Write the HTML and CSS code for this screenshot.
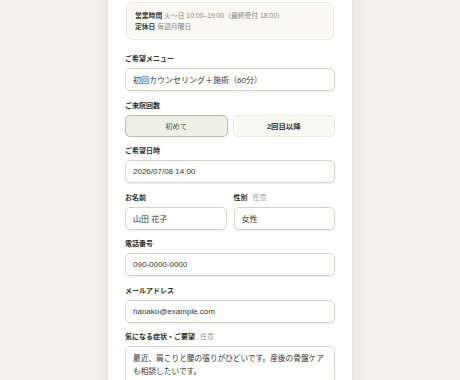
FILE: index.html
```html
<!DOCTYPE html>
<html lang="ja">
<head>
    <meta charset="UTF-8">
    <meta name="viewport" content="width=device-width, initial-scale=1.0">
    <title>ご予約フォーム</title>
    <link rel="stylesheet" href="styles.css">
</head>
<body>
    <div class="card">
        <!-- 営業案内 -->
        <div class="info">
            <p><strong>営業時間</strong> 火〜日 10:00–19:00（最終受付 18:00）</p>
            <p><strong>定休日</strong> 毎週月曜日</p>
        </div>

        <form class="form">
            <div class="field">
                <label for="menu">ご希望メニュー</label>
                <input type="text" id="menu" value="初回カウンセリング＋施術（60分）">
            </div>
            <div class="field">
                <label>ご来院回数</label>
                <div class="choice">
                    <button type="button" class="active">初めて</button>
                    <button type="button">2回目以降</button>
                </div>
            </div>
            <div class="field">
                <label for="date">ご希望日時</label>
                <input type="text" id="date" value="2026/07/08 14:00">
            </div>
            <div class="row">
                <div class="field">
                    <label for="name">お名前</label>
                    <input type="text" id="name" value="山田 花子">
                </div>
                <div class="field">
                    <label for="sex">性別<span class="optional">任意</span></label>
                    <input type="text" id="sex" value="女性">
                </div>
            </div>
            <div class="field">
                <label for="tel">電話番号</label>
                <input type="text" id="tel" value="090-0000-0000">
            </div>
            <div class="field">
                <label for="mail">メールアドレス</label>
                <input type="text" id="mail" value="hanako@example.com">
            </div>
            <div class="field">
                <label for="notes">気になる症状・ご要望<span class="optional">任意</span></label>
                <textarea id="notes" rows="3">最近、肩こりと腰の張りがひどいです。産後の骨盤ケアも相談したいです。</textarea>
            </div>
        </form>
    </div>
</body>
</html>
```

FILE: styles.css
```css
body {
    margin: 0;
    padding: 0;
    background-color: #f2f0ea;
    font-family: "Liberation Sans", "Noto Sans CJK JP", sans-serif;
    color: #33322e;
}
.card {
    width: 210px;
    margin: -16px auto 0;
    padding: 18px 17px 40px;
    background: #fff;
    box-shadow: 0 0 14px rgba(60, 55, 40, 0.10);
}
.info {
    margin: 0 1px;
    padding: 7px 8px;
    background: #faf9f5;
    border: 1px solid #ebe9e0;
    border-radius: 6px;
    font-size: 6.8px;
    color: #86847c;
}
.info p {
    margin: 0;
    line-height: 11px;
}
.info strong {
    color: #3a3935;
    font-weight: bold;
}
.form {
    margin-top: 14px;
}
.field {
    margin-bottom: 9.5px;
}
.field label {
    display: block;
    margin-bottom: 4px;
    font-size: 7px;
    line-height: 10px;
    font-weight: bold;
    color: #2f2e2a;
}
.optional {
    margin-left: 5px;
    font-weight: normal;
    color: #9a988f;
}
.field input, .field textarea {
    display: block;
    box-sizing: border-box;
    width: 100%;
    height: 23px;
    margin: 0;
    padding: 0 7px;
    font-family: "Liberation Sans", "Noto Sans CJK JP", sans-serif;
    font-size: 8px;
    color: #34332f;
    background: #fff;
    border: 1.5px solid #d6d3c5;
    border-radius: 5px;
    box-shadow: 0 1px 1px rgba(80, 75, 50, 0.08);
    outline: none;
}
.field textarea {
    height: 50px;
    padding: 5px 7px;
    font-size: 7.7px;
    line-height: 13px;
    resize: none;
}
.choice {
    display: grid;
    grid-template-columns: 1fr 1fr;
    gap: 5px;
}
.choice button {
    height: 22px;
    font-family: "Liberation Sans", "Noto Sans CJK JP", sans-serif;
    font-size: 7.4px;
    font-weight: bold;
    color: #3a3935;
    background: #f8f7f2;
    border: 1px solid #ebe9e0;
    border-radius: 5px;
}
.choice button.active {
    background: #eef0e5;
    border: 1.5px solid #b9bca6;
    color: #4c5040;
    font-weight: normal;
}
.row {
    display: grid;
    grid-template-columns: 1fr 1fr;
    gap: 7px;
}
```
